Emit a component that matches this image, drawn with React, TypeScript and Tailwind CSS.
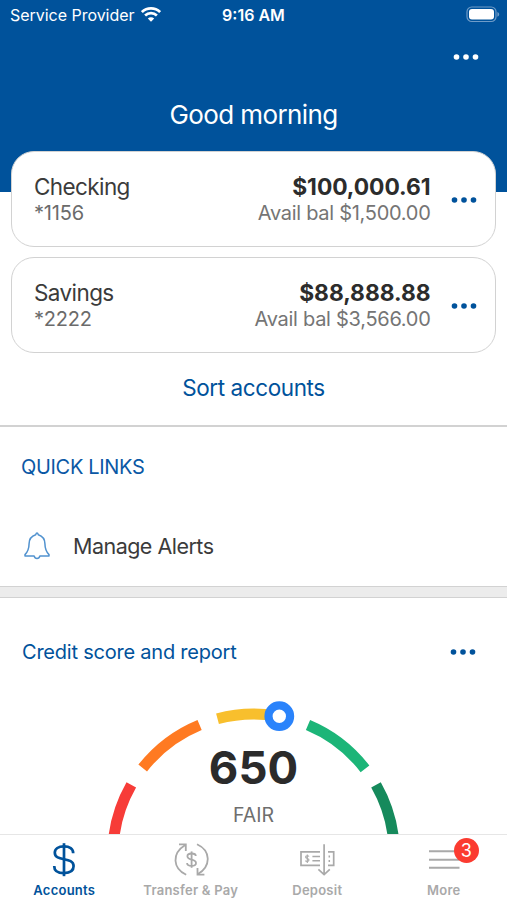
import type { ReactNode } from "react"

interface Account {
  name: string
  mask: string
  balance: string
  available: string
}

const accounts: Account[] = [
  { name: "Checking", mask: "*1156", balance: "$100,000.61", available: "Avail bal $1,500.00" },
  { name: "Savings", mask: "*2222", balance: "$88,888.88", available: "Avail bal $3,566.00" },
]

function Dots() {
  return (
    <svg width="26" height="8" viewBox="0 0 26 8" fill="currentColor" className="block shrink-0">
      <circle cx="3.5" cy="4" r="2.8" />
      <circle cx="13" cy="4" r="2.8" />
      <circle cx="22.5" cy="4" r="2.8" />
    </svg>
  )
}

function StatusBar() {
  return (
    <div className="grid h-[30px] grid-cols-3 items-center">
      <div className="flex items-center gap-[6px] whitespace-nowrap pl-[10px]">
        <span className="text-[16px] leading-[30px] tracking-[-0.03px]">Service Provider</span>
        <svg width="20" height="15" viewBox="0 0 20 15" fill="none" stroke="currentColor" strokeWidth="2.7" className="-mt-px shrink-0">
          <path d="M0.9 5.1 C6 0.2 14 0.2 19.1 5.1" />
          <path d="M4.1 8.5 C7.4 5.4 12.6 5.4 15.9 8.5" />
          <path d="M10 14.8 L6.8 11.5 C8.7 9.8 11.3 9.8 13.2 11.5 Z" fill="currentColor" stroke="none" />
        </svg>
      </div>
      <div className="text-center text-[16px] font-semibold">9:16 AM</div>
      <div className="flex justify-end pr-[7px]">
        <svg width="34" height="17" viewBox="0 0 34 17" fill="none" className="-mt-[2px]">
          <rect x="1" y="1" width="29" height="14.5" rx="4.8" stroke="#6f9cc8" strokeWidth="1.2" />
          <rect x="3" y="3" width="25" height="10.5" rx="3" fill="white" />
          <path d="M31.4 6 C33.8 7 33.8 9.8 31.4 10.8 Z" fill="#6f9cc8" />
        </svg>
      </div>
    </div>
  )
}

function AccountCard({ account }: { account: Account }) {
  return (
    <div className="flex h-24 items-center rounded-[23px] border-[1.5px] border-[#d2d2d2] bg-white pl-[22px] pr-[18.5px] pt-px">
      <div className="flex-1">
        <div className="text-[22.5px] leading-[27px] tracking-[-0.6px] text-[#3b3b3b]">{account.name}</div>
        <div className="text-[20px] leading-[27px] tracking-[-0.2px] text-[#6b6b6b]">{account.mask}</div>
      </div>
      <div className="text-right">
        <div className="text-[22.8px] font-bold leading-[27px] tracking-[-0.05px] text-[#2c2c2c]">{account.balance}</div>
        <div className="text-[20px] leading-[27px] tracking-[-0.28px] text-[#757575]">{account.available}</div>
      </div>
      <div className="ml-5 text-[#00529b]">
        <Dots />
      </div>
    </div>
  )
}

function Gauge() {
  return (
    <div className="relative h-[134px]">
      <svg width="507" height="134" viewBox="0 700 507 134" fill="none" strokeWidth="11" className="block">
        <path d="M131.3 784.9 A140.6 140.6 0 0 0 112.9 854.6" stroke="#f73c38" />
        <path d="M142.7 768 A140.6 140.6 0 0 1 199.6 725" stroke="#ff7a22" />
        <path d="M217.5 718.7 A140.6 140.6 0 0 1 276 715.8" stroke="#f8bf2d" />
        <path d="M308 725 A140.6 140.6 0 0 1 365 768.8" stroke="#1cb578" />
        <path d="M376 784.9 A140.6 140.6 0 0 1 394.3 854.6" stroke="#168a5c" />
        <circle cx="279.3" cy="716.2" r="10.8" fill="white" stroke="#2a83fb" strokeWidth="8.2" />
      </svg>
      <div className="absolute inset-x-0 top-[42px] text-center">
        <div className="text-[45.5px] font-bold leading-[52px] text-[#2b2b2b]">650</div>
        <div className="mt-[8px] text-[19.5px] leading-[26px] text-[#6e6e6e]">FAIR</div>
      </div>
    </div>
  )
}

function BellIcon() {
  return (
    <svg width="26" height="28" viewBox="0 0 26 28" fill="none" stroke="#5192cf" strokeWidth="1.5" strokeLinejoin="round" strokeLinecap="round">
      <path d="M13 1 C12.3 1 12 1.8 11.7 2.8 C7.5 4.2 5.2 7 5.1 11.5 C5 16.5 4.2 19.5 1 22.6 V23.9 H10.1 C10.6 25.8 11.6 26.6 13 26.6 C14.4 26.6 15.4 25.8 15.9 23.9 H25 V22.6 C21.8 19.5 21 16.5 20.9 11.5 C20.8 7 18.5 4.2 14.3 2.8 C14 1.8 13.7 1 13 1 Z" />
    </svg>
  )
}

function DollarIcon() {
  return (
    <svg width="36" height="36" viewBox="0 0 36 36" fill="none" stroke="currentColor" strokeWidth="2.7">
      <path d="M18 1.2 V34.2" />
      <path d="M27.2 11.2 C27.2 6.7 23.6 4.3 18 4.3 C12.4 4.3 8.8 6.7 8.8 10.7 C8.8 20.2 27.6 14.2 27.6 24.1 C27.6 28.7 23.8 31.1 18 31.1 C12 31.1 8.2 28.7 8.2 23.9" />
    </svg>
  )
}

function TransferIcon() {
  return (
    <svg width="36" height="36" viewBox="0 0 36 36" fill="none" stroke="currentColor" strokeWidth="1.8">
      <path d="M13.2 32.7 C-0.2 26.5 -1.6 11.5 12.2 2.9" />
      <path d="M6 2.4 H12.8 V9" />
      <path d="M24 2.3 C37.4 8.5 38.8 23.5 25 32.1" />
      <path d="M31.4 32.7 H24.5 V26" />
      <path d="M18.6 9.4 V25.8" />
      <path d="M22.8 14 C22.8 12.3 21 11.5 18.6 11.5 C16.2 11.5 14.4 12.3 14.4 14.2 C14.4 18.7 23 16.3 23 20.9 C23 22.8 21 23.8 18.6 23.8 C16 23.8 14.1 22.8 14.1 20.9" />
    </svg>
  )
}

function DepositIcon() {
  return (
    <svg width="36" height="36" viewBox="0 0 36 36" fill="none" stroke="currentColor" strokeWidth="1.5">
      <path d="M21 9.8 H2 V23.4 H21 M29 9.8 H34.7 V23.4 H29" strokeWidth="1.7" />
      <path d="M25.1 2.2 V32.5 M19.4 27.4 L25.1 32.6 L30.8 27.4" strokeWidth="1.7" />
      <path d="M13.4 14.4 H21 M13.4 18.8 H21 M30.3 13.4 V15.4 M30.3 18 V20" />
      <path d="M10 14.5 C9.4 13.4 6.6 13.5 6.6 15.1 C6.6 17 10 16 10 18.1 C10 19.8 7.1 19.8 6.4 18.6 M8.3 12.6 V20.9" strokeWidth="1.1" />
    </svg>
  )
}

function MoreIcon() {
  return (
    <div className="relative">
      <svg width="36" height="36" viewBox="0 0 36 36" fill="none" stroke="currentColor" strokeWidth="2">
        <path d="M3 9.3 H33.5 M3 17.7 H33.5 M3 25.7 H33.5" />
      </svg>
      <span className="absolute -top-[4px] left-[28px] flex size-[25px] items-center justify-center rounded-full bg-[#fb3b30] text-[18px] leading-none text-white">
        3
      </span>
    </div>
  )
}

interface TabProps {
  label: string
  icon: ReactNode
  active?: boolean
}

function Tab({ label, icon, active }: TabProps) {
  return (
    <div className={active ? "flex flex-1 flex-col items-center text-[#00529b]" : "flex flex-1 flex-col items-center text-[#a9a9a9]"}>
      {icon}
      <span className="mt-[3px] text-[13px] font-semibold leading-[18px] tracking-[0.25px]">{label}</span>
    </div>
  )
}

export default function App() {
  return (
    <div className="flex h-[900px] w-[507px] flex-col overflow-hidden bg-white font-['Inter',sans-serif]">
      {/* Header */}
      <header className="h-48 shrink-0 bg-[#00529b] text-white">
        <StatusBar />
        <div className="mt-[23px] flex justify-end pr-[28px]">
          <Dots />
        </div>
        <h1 className="mt-[36px] text-center text-[26px] leading-[36px] tracking-[-0.6px]">Good morning</h1>
      </header>

      {/* Accounts */}
      <section className="relative -mt-[41px] flex shrink-0 flex-col gap-[10px] px-[11px]">
        {accounts.map((account) => (
          <AccountCard key={account.name} account={account} />
        ))}
      </section>
      <button className="h-[72px] shrink-0 pb-[2px] text-[22.5px] tracking-[-0.42px] text-[#00529b]">Sort accounts</button>

      {/* Quick links */}
      <section className="h-[161px] shrink-0 border-t-2 border-[#d2d2d2]">
        <h2 className="mt-[26px] pl-[21px] text-[20px] leading-[28px] tracking-[-0.32px] text-[#0a58a5]">QUICK LINKS</h2>
        <div className="mt-[51px] flex h-[28px] items-center gap-[23px] pl-[24px]">
          <BellIcon />
          <span className="text-[21.5px] leading-[28px] tracking-[-0.52px] text-[#3b3b3b]">Manage Alerts</span>
        </div>
      </section>
      <div className="h-[12px] shrink-0 border-y-[1.5px] border-[#d2d2d2] bg-[#ececec]" />

      {/* Credit score */}
      <section className="h-[236px] shrink-0">
        <div className="flex h-[102px] items-center justify-between pl-[22px] pr-[31px] pt-[5px] text-[#00529b]">
          <h2 className="pt-px text-[20px] leading-[28px] tracking-[-0.22px]">Credit score and report</h2>
          <Dots />
        </div>
        <Gauge />
      </section>

      {/* Bottom tabs */}
      <nav className="flex h-[66px] shrink-0 border-t-[1.5px] border-[#e6e6e6] bg-white pl-px pt-[7px]">
        <Tab label="Accounts" icon={<DollarIcon />} active />
        <Tab label="Transfer & Pay" icon={<TransferIcon />} />
        <Tab label="Deposit" icon={<DepositIcon />} />
        <Tab label="More" icon={<MoreIcon />} />
      </nav>
    </div>
  )
}
